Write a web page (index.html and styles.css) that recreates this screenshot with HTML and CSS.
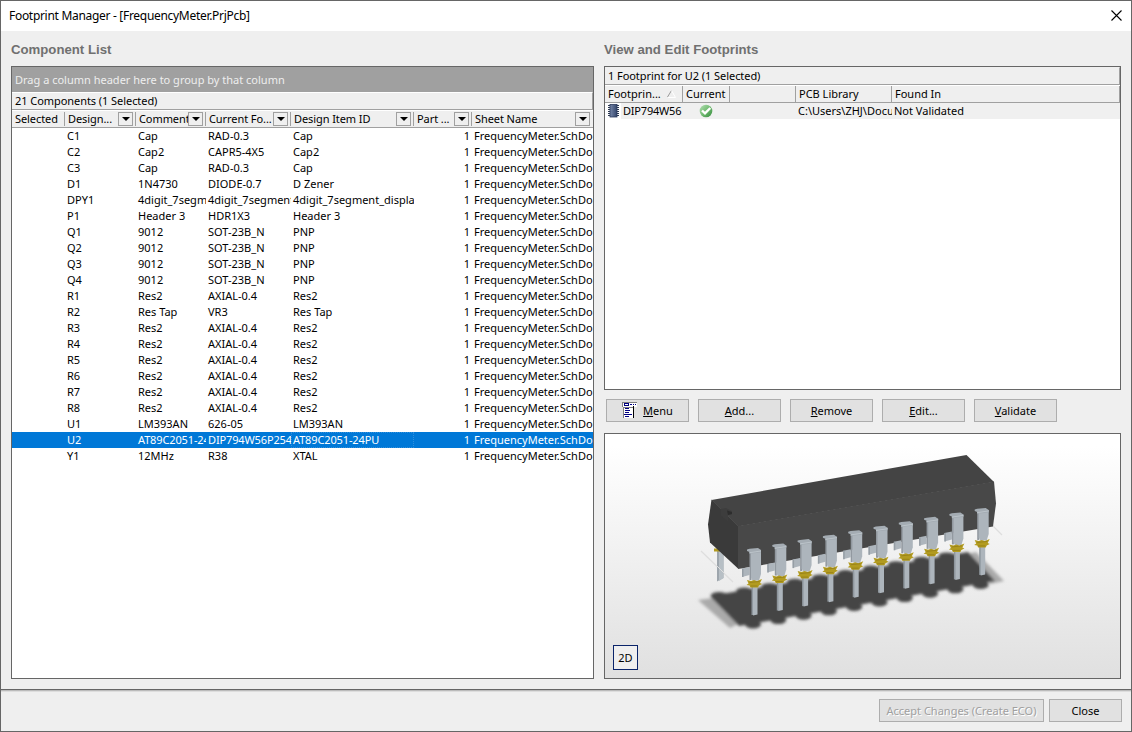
FILE: index.html
```
<!DOCTYPE html>
<html lang="en"><head><meta charset="utf-8"><title>Footprint Manager</title>
<link rel="stylesheet" href="styles.css"></head>
<body>
<div class="window">
<header class="titlebar"><span class="title">Footprint Manager - [FrequencyMeter.PrjPcb]</span>
<svg class="close-x" width="11" height="11" viewBox="0 0 11 11"><path d="M.5.5l10 10M10.5.5l-10 10" stroke="#000" stroke-width="1.1"/></svg></header>
<main class="content">
<section class="left">
<h2 class="heading">Component List</h2>
<div class="panel list">
<div class="groupbar">Drag a column header here to group by that column</div>
<div class="caption">21 Components (1 Selected)</div>
<div class="cols head"><div class="h nodrop">Selected</div><div class="h">Design...<i class="dd"></i></div><div class="h">Comment<i class="dd"></i></div><div class="h">Current Fo...<i class="dd"></i></div><div class="h">Design Item ID<i class="dd"></i></div><div class="h">Part ...<i class="dd"></i></div><div class="h">Sheet Name<i class="dd"></i></div></div>
<div id="rows"></div>
</div>
</section>
<section class="right">
<h2 class="heading">View and Edit Footprints</h2>
<div class="panel prints">
<div class="caption cap2">1 Footprint for U2 (1 Selected)</div>
<div class="pcols phead"><div class="ph">Footprin...<svg class="sort" width="9" height="8" viewBox="0 0 9 8"><path d="M.5 7L4.500 .5" stroke="#999" fill="none"/><path d="M4.500 .5L8.500 7.500H1" stroke="#fff" fill="none"/></svg></div><div class="ph">Current</div><div class="ph"></div><div class="ph">PCB Library</div><div class="ph last">Found In</div></div>
<div class="pcols prow"><div class="pc first"><svg class="chip" width="16" height="16" viewBox="0 0 16 16"><path d="M3 2.500h11M3 4.500h11M3 6.500h11M3 8.500h11M3 10.500h11M3 12.500h11" stroke="#2b3850"/><rect x="5" y="1.500" width="7" height="12.500" fill="url(#cg)" stroke="#2c3a5c" stroke-width=".8"/><defs><linearGradient id="cg"><stop stop-color="#7686a8"/><stop offset="1" stop-color="#34466c"/></linearGradient></defs></svg><span class="fname">DIP794W56</span></div><div class="pc mid"><svg width="14" height="14" viewBox="0 0 14 14"><defs><linearGradient id="gg" x2="1" y2="1"><stop stop-color="#b5e0b5"/><stop offset=".5" stop-color="#72bb72"/><stop offset="1" stop-color="#338a3b"/></linearGradient></defs><circle cx="7" cy="7" r="6.300" fill="url(#gg)"/><path d="M3 6.500L6 9.400 11.300 4" fill="none" stroke="#fff" stroke-width="2.400"/></svg></div><div class="pc"></div><div class="pc">C:\Users\ZHJ\Docu</div><div class="pc">Not Validated</div></div>
</div>
<div class="buttons">
<button class="btn"><svg class="menuicon" width="15" height="17" viewBox="0 0 15 17"><path fill="#fff" d="M0 1h15v4h-3v11H1V5H0z"/><path fill="#808080" d="M0 0h15v1H1v4H0zM1 5h11v1H2v10H1z"/><path fill="#000080" d="M2 1h5v3H2zM3 6h4v1H3zM3 8h5v1H3zM3 10h4v1H3zM2 12h8v1H2zM3 14h4v1H3zM8 2h2v1H8zM11 2h1v1h-1zM13 2h1v1h-1z"/><path fill="#fff" d="M3 2h3v1H3z"/><path fill="#000" d="M11 4h1v12h-1z"/></svg><span><u>M</u>enu</span></button>
<button class="btn"><span><u>A</u>dd...</span></button>
<button class="btn"><span><u>R</u>emove</span></button>
<button class="btn"><span><u>E</u>dit...</span></button>
<button class="btn"><span><u>V</u>alidate</span></button>
</div>
<div class="panel preview">
<svg class="scene" viewBox="605 434 515 244">
<defs><filter id="soft" x="-10%" y="-20%" width="120%" height="140%"><feGaussianBlur stdDeviation="1.700"/></filter>
<g id="pin"><path fill="#9299a0" d="M2 4h2v28H2z"/><path fill="#adb5bc" d="M3.500 3.500L13.500 2v24l-2 6.500H5l-1.500-3z"/><path fill="#a4acb3" d="M-.5 1.500L2 .8 10.500 0l3 2v2.500L2 5.800V4L-.5 3z"/><path d="M2 4.700l11.500-1.700" stroke="#bcc4ca" fill="none"/><path fill="#8f979e" d="M4 37h2v30H4z"/><path fill="#adb5bc" d="M5.500 38H10v28.500l-4.500 1z"/><path fill="#b29b20" d="M-.5 32l4 1 3-1 3 1 5-2-2 4 2 1-3 1.500-1 2H3l-1-2-3-.5 2-1.500z"/><path d="M2 34.500l10-1M3 38h7" stroke="#947e16" stroke-width=".8"/></g>
<g id="stub"><path fill="#adb5bc" d="M-5.500 20.500L2 19v8l-7.500 2z"/><path fill="#969ea5" d="M-5.500 20.500h1.500V29h-1.500z"/></g></defs>
<g filter="url(#soft)"><path fill="#aaa" d="M698 600l15-2 25 26-8 4zM967 554l9-2 28 29-14 3z"/><path fill="#444" d="M710 596L968 552l27 29-256 45z"/><g id="bumps"></g></g>
<path d="M701 551l32 31M992 525l10 10" stroke="#dedede" stroke-width="1.300"/>
<path fill="#9da5ac" d="M717 550h6.500v28l-6.500 3.500z"/><path fill="#b7bfc5" d="M719 550h4.500v28l-4.500 3z"/><path d="M714 550h6" stroke="#b29b20" stroke-width="3"/><path d="M717 566l8 8" stroke="#dedede"/>
<path fill="#444" d="M711.500 500L966.500 455l27.500 27-256 44.500z"/>
<path fill="#3a3a3a" d="M711.500 499.500L738 526v42.500l-28-26-2-18z"/>
<path fill="#484848" d="M738 526L994 481.500l2 22-3 23-255 42.500z"/>
<path fill="#3d3d3d" d="M721 509l5-1 6 3v3l-4 1v6.500l-7-6z"/><path fill="#2d2d2d" d="M727 510.500l5 1.500v2l-4 1z"/>
<g id="pins"></g>
</svg>
<button class="two-d">2D</button>
</div>
</section>
</main>
<footer class="footer"><button class="btn wide disabled">Accept Changes (Create ECO)</button><button class="btn closebtn">Close</button></footer>
</div>
<script src="app.js"></script>
</body></html>
```
FILE: styles.css
```
*{box-sizing:border-box}
body{margin:0;font:11px/16px "Noto Sans","Open Sans",sans-serif;color:#000;overflow:hidden}
.window{width:1132px;height:732px;border:1px solid #666;background:#efefef;display:flex;flex-direction:column}
.titlebar{height:30px;background:#fff;display:flex;align-items:center;justify-content:space-between;padding:0 9px 1px 8px;font-size:12px}
.title{letter-spacing:-.3px}
.content{height:658px;display:flex;padding-left:10px;gap:10px}
.left{width:583px}
.right{width:517px}
.heading{margin:0;height:35px;padding-top:10px;font:bold 13.2px/17px "Liberation Sans",Arial,sans-serif;color:#707070}
.panel{border:1px solid #666;background:#fff;overflow:hidden}
.list{height:613px}
.groupbar{height:25px;background:#a0a0a0;color:#eee;padding:5px 3px}
.caption{height:18px;line-height:15px;background:#efefef;border-top:1px solid #fff;border-bottom:1px solid #a0a0a0;border-right:1px solid #a0a0a0;padding-left:3px;letter-spacing:-.06px}
.cols{display:grid;grid-template-columns:53px 71px 70px 85px 123px 58px 121px;white-space:nowrap}
.head{height:18px;background:#efefef;border-top:1px solid #fff;border-bottom:1px solid #a0a0a0;letter-spacing:-.08px}
.h{display:flex;justify-content:space-between;align-items:center;padding:0 2px 0 3px;border-right:1px solid #a0a0a0;overflow:hidden;height:14px;margin-top:1px;line-height:14px}
.h:last-child{border-right:0;padding-right:3px}
.dd{flex:none;width:15px;height:14px;margin-left:-8px;border:1px solid #a0a0a0;background:#efefef;display:flex;align-items:center;justify-content:center}
.dd::after{content:"";border:4px solid transparent;border-top-color:#000;border-bottom:0}
.row{height:16px}
.c{overflow:hidden;padding-left:2px;height:16px}
.num{text-align:right;padding-right:2px}
.sel{background:#0078d7;color:#fff;letter-spacing:-.13px}
.sel .c:last-child{letter-spacing:0}
.focus{outline:1px dotted #2f8fdd;outline-offset:-1px}
.prints{height:324px}
.cap2{border-top-color:#efefef;line-height:16px}
.pcols{display:grid;grid-template-columns:78px 47px 66px 96px 228px;white-space:nowrap}
.phead{height:18px;background:#efefef;border-bottom:1px solid #a0a0a0;border-top:1px solid #fff}
.ph{border-right:1px solid #a0a0a0;padding-left:3px;line-height:16px}
.sort{margin-left:6px}
.prow{height:16px;background:#f0f0f0}
.pc{padding-left:2px;overflow:hidden;height:16px}
.first{display:flex;padding:0;background:#fff}
.chip{flex:none}
.fname{background:#f0f0f0;width:62px;padding-left:2px;letter-spacing:-.2px}
.mid{padding:1px 0 0 16px}
.buttons{display:flex;gap:9px;padding:9px 0 11px 2px}
.btn{font:11px/16px "Noto Sans",sans-serif;width:83px;height:23px;border:1px solid #adadad;background:#e1e1e1;color:#000;display:flex;align-items:center;justify-content:center;padding:0;white-space:nowrap}
.menuicon{margin-right:6px}
.preview{position:relative;height:246px;background:linear-gradient(#fff 5%,#e0e0e0)}
.scene{display:block;width:515px;height:244px}
.two-d{position:absolute;left:8px;top:211px;width:25px;height:25px;border:1px solid #0a246a;background:#efefef;padding:0;font:11px "Noto Sans",sans-serif;color:#000}
.footer{height:42px;border-top:1px solid #666;box-shadow:inset 0 1px #bbb,inset 0 2px #ddd;display:flex;justify-content:flex-end;gap:5px;padding:9px 9px 0 0}
.wide{width:165px}
.closebtn{width:73px}
.disabled{color:#a0a0a0;text-shadow:1px 1px #fff}
```
FILE: app.js
```
const parts = `C1|Cap|RAD-0.3|Cap
C2|Cap2|CAPR5-4X5|Cap2
C3|Cap|RAD-0.3|Cap
D1|1N4730|DIODE-0.7|D Zener
DPY1|4digit_7segm|4digit_7segment|4digit_7segment_displa
P1|Header 3|HDR1X3|Header 3
Q1|9012|SOT-23B_N|PNP
Q2|9012|SOT-23B_N|PNP
Q3|9012|SOT-23B_N|PNP
Q4|9012|SOT-23B_N|PNP
R1|Res2|AXIAL-0.4|Res2
R2|Res Tap|VR3|Res Tap
R3|Res2|AXIAL-0.4|Res2
R4|Res2|AXIAL-0.4|Res2
R5|Res2|AXIAL-0.4|Res2
R6|Res2|AXIAL-0.4|Res2
R7|Res2|AXIAL-0.4|Res2
R8|Res2|AXIAL-0.4|Res2
U1|LM393AN|626-05|LM393AN
U2|AT89C2051-24|DIP794W56P254|AT89C2051-24PU
Y1|12MHz|R38|XTAL`.split('\n').map(r => r.split('|'));
document.getElementById('rows').innerHTML = parts.map(p => {
  const sel = p[0] === 'U2';
  return `<div class="cols row${sel ? ' sel' : ''}"><div class="c"></div><div class="c">${p[0]}</div><div class="c">${p[1]}</div><div class="c">${p[2]}</div><div class="c${sel ? ' focus' : ''}">${p[3]}</div><div class="c num">1</div><div class="c">FrequencyMeter.SchDo</div></div>`;
}).join('');
// Ten pins recede along the body, each with its shadow on the ground.
let pins = '', bumps = '';
for (let i = 0; i < 10; i++) {
  const x = 747.5 + 25.3 * i, y = 548 - 4.45 * i;
  if (i < 9) pins += `<use href="#stub" x="${x}" y="${y}"/>`;
  pins += `<use href="#pin" x="${x}" y="${y}"/>`;
  bumps += `<ellipse cx="${719 + 25.3 * i}" cy="${595 - 4.4 * i}" rx="8" ry="3" fill="#444"/><ellipse cx="${753 + 25.3 * i}" cy="${624.5 - 4.4 * i}" rx="8" ry="4" fill="#444"/>`;
}
document.getElementById('pins').innerHTML = pins;
document.getElementById('bumps').innerHTML = bumps;
```
